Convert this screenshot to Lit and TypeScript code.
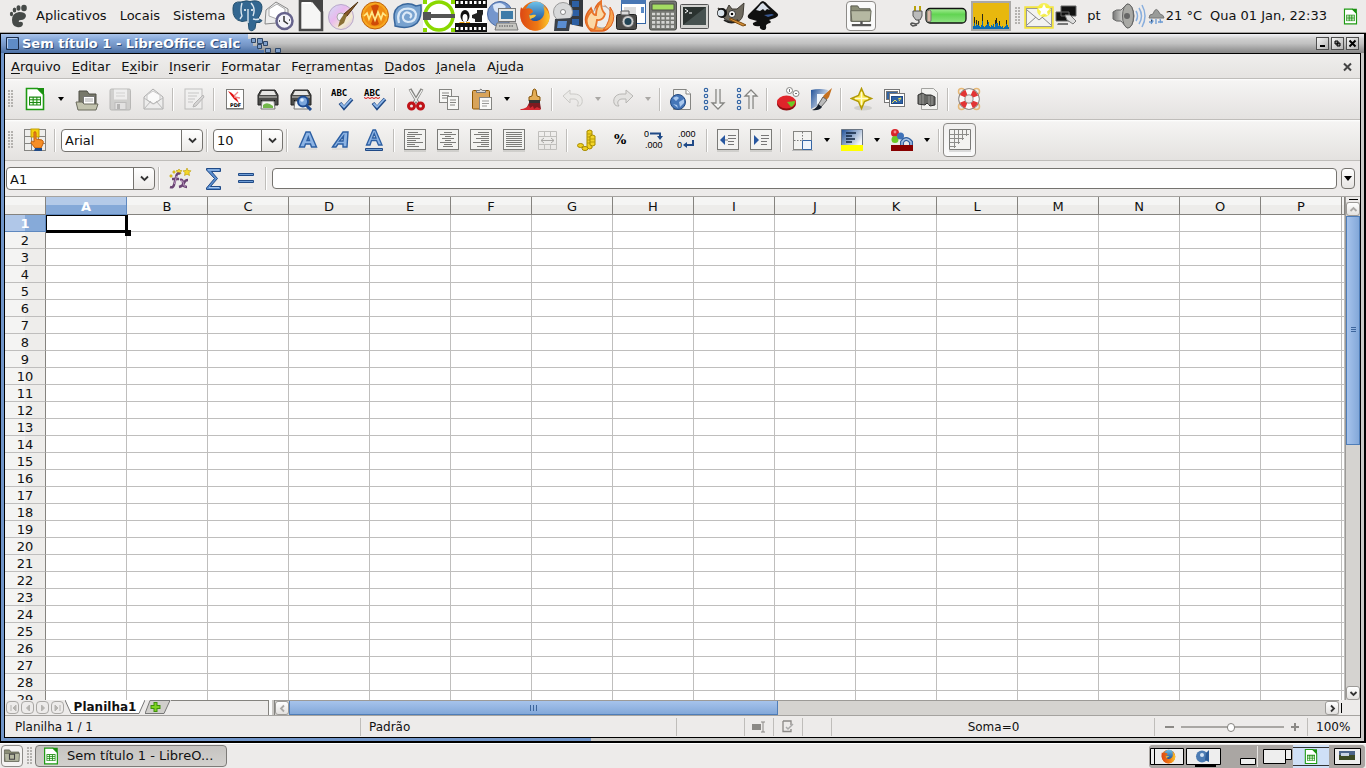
import { LitElement, html, svg, css } from "lit";
import { customElement } from "lit/decorators.js";
import { classMap } from "lit/directives/class-map.js";

const calcDoc = svg`
  <path d="M3.500 1.500h11l6 6v15h-17z" fill="#fff" stroke="#1e9a12" stroke-width="1.600"/>
  <path d="M14 1h7v7z" fill="#1a8f10"/>
  <path d="M6 9.500h12v9H6z" fill="#1d8a12"/>
  <path d="M7 10.700h2.600v1.600H7zM10.700 10.700h2.600v1.600h-2.600zM14.400 10.700H17v1.600h-2.600zM7 13.300h2.600v1.600H7zM10.700 13.300h2.600v1.600h-2.600zM14.400 13.300H17v1.600h-2.600zM7 15.900h2.600v1.600H7zM10.700 15.900h2.600v1.600h-2.600zM14.400 15.900H17v1.600h-2.600z" fill="#e9ffe4"/>`;

const printer = svg`
  <path d="M5 3h14l3 5v10H2V8z" fill="#4a4b49" stroke="#222"/>
  <path d="M6 4h12l2 4H4z" fill="#e6e6e4"/>
  <path d="M3 10h18" stroke="#8d8d8a" stroke-width="2"/>
  <path d="M5 13h14v2H5z" fill="#111"/>
  <path d="M6 14h12l1 8H5z" fill="#f4f4f2" stroke="#777"/>`;

const check = svg`<path d="M10 16l4 5 8-9" fill="none" stroke="#204a87" stroke-width="3.600"/><path d="M10.500 16.500l3.500 3.500 7.500-8" fill="none" stroke="#8fb8ea" stroke-width="1.800"/>`;

const lined = (rows: number[][]) => svg`
  <path d="M1 22.500h22v1H1z" fill="#b9b8b5"/>
  <rect x="1.500" y="1.500" width="21" height="20" fill="#f3f3f1" stroke="#7b7b78"/>
  ${rows.map(([a, b], i) => svg`<path d="M${a} ${4.5 + i * 2}H${b}" stroke="#7b7b78"/>`)}`;

const firefox = svg`
  <circle cx="16" cy="16" r="14.500" fill="#e66a10"/>
  <circle cx="17" cy="12" r="10.500" fill="url(#ffblue)"/>
  <path d="M2 7c1 2 3 2 4 2 4-2 8 0 8 3l-4 3c0 6 7 8 12 4 4-3 4-9 2-13 6 4 8 11 5 17-4 8-14 10-21 5C1 23 0 14 2 7z" fill="url(#ffor)"/>
  <path d="M10 15c2 1 4-1 7 0-1 3-4 3-6 4z" fill="#f9c33a"/>`;

const folder = svg`
  <path d="M5 7h7l2 3h11v13H5z" fill="#8b8e77" stroke="#55574a"/>
  <path d="M5 12h21l-1 11H6z" fill="#b5b8a2" stroke="#66685a"/>`;

const ICONS: Record<string, unknown> = {
  calc: calcDoc,
  open: svg`<path d="M4 20V4h8l2 3h7v13z" fill="#77786a" stroke="#4e4f45"/><rect x="8.500" y="9.500" width="11" height="8" fill="#fff" stroke="#777"/><path d="M10 12h8M10 14h8" stroke="#aaa"/><path d="M1 15h6l2 2h14l-2 6H3z" fill="#c2c3ae" stroke="#6a6b5d"/>`,
  save: svg`<g opacity=".55"><rect x="2" y="2" width="20.500" height="21" rx="1.500" fill="#b9b9b7" stroke="#8f8f8d"/><rect x="6" y="2.500" width="13" height="10" fill="#eee"/><path d="M8 6h9M8 9h9" stroke="#bbb"/><rect x="7" y="15.500" width="11" height="7" fill="#ddd" stroke="#999"/><path d="M9 17h3v5H9z" fill="#888"/></g>`,
  mail: svg`<g opacity=".75"><path d="M3 10l9-8 10 8v12H3z" fill="#eee" stroke="#999"/><path d="M6 8l6-4 7 4v5l-6 4-7-4z" fill="#fff" stroke="#bbb"/><path d="M3 22l7-8M22 22l-7-8M3 11l9 6 10-6" fill="none" stroke="#aaa"/></g>`,
  edit: svg`<g opacity=".45"><rect x="3" y="2" width="17" height="20" fill="#f4f4f4" stroke="#888"/><path d="M6 6h11M6 9h9M6 12h7M6 15h5" stroke="#999"/><path d="M21 8l-9 9-1 3 3-1 8-9z" fill="#bbb" stroke="#777"/></g>`,
  pdf: svg`<rect x="3.500" y="2.500" width="17" height="19" fill="#fff" stroke="#7b7b78"/><path d="M3 22.500h18" stroke="#aaa"/><path d="M5 4q5 2 9 8l2 4-5-4q-4-5-6-8z" fill="#e01010"/><path d="M11 9l4-4M11 10l6 1" fill="none" stroke="#f08080" stroke-width="1.300"/><text x="7" y="20" font-size="5" font-weight="700" font-family="DejaVu Sans">PDF</text>`,
  print: svg`${printer}<path d="M7 18q4-4 10 1v2H7z" fill="#72b84a"/>`,
  preview: svg`${printer}<path d="M17 18l5 5" stroke="#1e4c93" stroke-width="3"/><circle cx="14" cy="14.500" r="5" fill="#7ba6dc" stroke="#1e4c93" stroke-width="2"/><circle cx="13" cy="13" r="1.800" fill="#dceaff"/>`,
  spell: svg`<text x="1" y="8.500" font-size="9" font-weight="700" font-family="DejaVu Sans Mono, monospace">ABC</text>${check}`,
  autospell: svg`<text x="1" y="8.500" font-size="9" font-weight="700" font-family="DejaVu Sans Mono, monospace">ABC</text><path d="M1 10.500l2 1 2-1 2 1 2-1 2 1 2-1 2 1 2-1" fill="none" stroke="#d11"/>${check}`,
  cut: svg`<path d="M6 2l8 14M18 2l-8 14" stroke="#858582" stroke-width="3.200"/><path d="M6 3l8 13M18 3l-8 13" stroke="#f2f2f0" stroke-width="1.300"/><g fill="none" stroke="#c01318" stroke-width="3"><circle cx="7.500" cy="19" r="3"/><circle cx="16.500" cy="19" r="3"/></g>`,
  copy: svg`<g fill="#f7f7f5" stroke="#858582"><rect x="2.500" y="2.500" width="12" height="13"/><path d="M5 6h7M5 8.500h7M5 11h5"/><rect x="10.500" y="9.500" width="11" height="13"/><path d="M13 13h6M13 15.500h6M13 18h5"/></g>`,
  paste: svg`<rect x="2.500" y="3.500" width="17" height="18.500" rx="1" fill="#d8a45a" stroke="#8f5902"/><path d="M6.500 5.500V3.500h3q1-3 3 0h3v2z" fill="#ddd" stroke="#777"/><rect x="9.500" y="10.500" width="12" height="12" fill="#fafaf8" stroke="#858582"/><path d="M12 14h7M12 16.500h7M12 19h5" stroke="#9a9a98"/>`,
  brush: svg`<path d="M12 9l1-6q1.500-2 3 0l1 6 3 1v4H9v-4z" fill="#e3ad56" stroke="#84540b"/><path d="M9 13h11v3H9z" fill="#333"/><path d="M9 16h11l1 6H6z" fill="#7d1a20"/><path d="M0 22c5 0 7-2 9-4l1 3 3-2 1 3 3-2 4 2-1 1H1z" fill="#d52a32"/>`,
  undo: svg`<path d="M2 9l7-6v4h4c7 0 9 5 8 9-1 3-3 3-5 3 3-4 0-7-3-7H9v4z" fill="#ebeae8" stroke="#cbcac7"/>`,
  redo: svg`<path d="M22 9l-7-6v4h-4C4 7 2 12 3 16c1 3 3 3 5 3-3-4 0-7 3-7h4v4z" fill="#e4e3e1" stroke="#b7b6b3"/>`,
  web: svg`<path d="M4.500 2.500h13l4 4v16h-17z" fill="#f2f2f0" stroke="#858582"/><path d="M17 2v5h5" fill="#fff" stroke="#858582"/><circle cx="9" cy="15" r="7.500" fill="#4576b8" stroke="#234a82"/><path d="M4 11q4-3 6 0l-3 3zM10 15l5-3v4l-4 4zM4 17l4 1 1 3z" fill="#a9c8ee"/>`,
  sortdown: svg`<g fill="#fff" stroke="#3465a4" stroke-width="1.200"><circle cx="4" cy="3" r="1.700"/><circle cx="4" cy="9" r="1.700"/><circle cx="4" cy="15" r="1.700"/><circle cx="4" cy="21" r="1.700"/></g><path d="M14 2v14h-4l6 6 6-6h-4V2" fill="#fbfbfa" stroke="#858582" stroke-width="1.300"/><path d="M16 2v17" stroke="#ddd"/>`,
  sortup: svg`<g fill="#fff" stroke="#3465a4" stroke-width="1.200"><circle cx="4" cy="3" r="1.700"/><circle cx="4" cy="9" r="1.700"/><circle cx="4" cy="15" r="1.700"/><circle cx="4" cy="21" r="1.700"/></g><path d="M14 22V9h-4l6-6 6 6h-4v13" fill="#fbfbfa" stroke="#858582" stroke-width="1.300"/><path d="M16 5v17" stroke="#ddd"/>`,
  chart: svg`<ellipse cx="10.500" cy="17" rx="9.500" ry="6.500" fill="#8d0c10"/><ellipse cx="10.500" cy="15" rx="9.500" ry="6.500" fill="#e0242a"/><path d="M11 15l8-1q0 4-4 6z" fill="#6cc926"/><g fill="#fff" stroke="#858582"><circle cx="13.500" cy="3.500" r="3"/><circle cx="20" cy="6.500" r="3"/></g><path d="M13.500 2v3M19 6.500h2" stroke="#777"/>`,
  draw: svg`<path d="M2 3q9-2 17 0l-1 4H8v12l-6 3z" fill="url(#navy)"/><path d="M8 7h11l-8 11H8z" fill="#f1f6fb"/><path d="M23 1l-8 7-3 5 4 2 4-5z" fill="#c4701f"/><path d="M14 10l4 3-6 7-3-2z" fill="#bbb" stroke="#666"/><path d="M9 17l4 3q-3 4-10 3 5-2 6-6z" fill="#16202e"/>`,
  navigator: svg`<ellipse cx="13" cy="21" rx="9" ry="2.500" fill="#d1d0cd"/><path d="M11.500 1.500l3 7 7 3-7 3-3 7-3-7-7-3 7-3z" fill="#fbe84c" stroke="#b29a06" stroke-width="1.500"/><path d="M11.500 5v13M5 11.500h13" stroke="#fffbd0" stroke-width="1.500"/>`,
  gallery: svg`<g stroke="#777"><rect x="1.500" y="2.500" width="15" height="13" fill="#fff"/><rect x="3.500" y="4.500" width="11" height="8" fill="#3465a4"/><rect x="6.500" y="6.500" width="15" height="13" fill="#fff"/><rect x="8.500" y="9.500" width="11" height="7" fill="#2f62a5" stroke="#204a87"/></g><path d="M9 16l3-3 2 2M15 12l3-1-2 3" fill="none" stroke="#f0e25a"/>`,
  find: svg`<path d="M5.500 1.500h12l4 4v17h-16z" fill="#f2f2f0" stroke="#a3a3a0"/><path d="M2 8l4-2 4 2h5l4 2v8l-5 1-3-3-2 2-7-1z" fill="#666764" stroke="#333"/><path d="M4 8v9M7 7v10M13 9v9M16 9v9" stroke="#9b9c99"/>`,
  help: svg`<g fill="none" stroke="#e6b877" stroke-width="1.500"><circle cx="4.500" cy="4.500" r="3"/><circle cx="19.500" cy="4.500" r="3"/><circle cx="4.500" cy="19.500" r="3"/><circle cx="19.500" cy="19.500" r="3"/></g><circle cx="12" cy="12" r="7.200" fill="none" stroke="#77716c" stroke-width="7"/><circle cx="12" cy="12" r="7.200" fill="none" stroke="#fafafa" stroke-width="5.400"/><circle cx="12" cy="12" r="7.200" fill="none" stroke="#e23535" stroke-width="5.400" stroke-dasharray="5.650 5.660" transform="rotate(22 12 12)"/>`,
  styles: svg`<g fill="#eeeeec" stroke="#858582"><rect x="1.500" y="1.500" width="21" height="21"/><path d="M8.500 1v22M15.500 1v22M1 8.500h22M1 15.500h22"/></g><rect x="8" y="1" width="8" height="8" fill="#f6d20e" stroke="#c4a000"/><path d="M11 4q2-1 2 1v6l6 1q2 1 1 4l-2 4h-6l-4-5q0-3 3-1z" fill="#f78e26" stroke="#c2600c"/><path d="M12 20h7v3h-8z" fill="#204a87"/>`,
  bold: svg`<path d="M3.500 19L10 4h4l6.500 15h-5l-1-3h-5l-1 3zM11 12.500h2.500L12.300 9z" fill="#8db4e4" stroke="#2c5fa3" stroke-width="1.400"/><path d="M3 21h18" stroke="#d2d1ce"/>`,
  italic: svg`<path d="M3.500 19L14 4h5l-1 15h-4v-3H9l-2 3zM10.500 13H14l.500-5z" fill="#8db4e4" stroke="#2c5fa3" stroke-width="1.400"/><path d="M3 21h16" stroke="#d2d1ce"/>`,
  underline: svg`<path d="M4.500 17L11 2h2.500L20 17h-3.500l-2-4.500h-5L8 17zM10.500 10h3.500l-1.800-4.500z" fill="#8db4e4" stroke="#2c5fa3" stroke-width="1.300"/><path d="M3.500 20.500h17v2h-17z" fill="#729fcf" stroke="#204a87"/>`,
  left: lined([[5, 15], [4, 19], [4, 12], [4, 17], [4, 13], [4, 20], [4, 12], [4, 16]]),
  center: lined([[8, 16], [4, 20], [9, 15], [6, 18], [9, 15], [4, 20], [8, 16], [7, 17]]),
  right: lined([[9, 20], [5, 20], [12, 20], [7, 20], [12, 20], [4, 20], [12, 20], [8, 20]]),
  justify: lined([[4, 20], [4, 20], [4, 20], [4, 20], [4, 20], [4, 20], [4, 20], [4, 20]]),
  merge: svg`<g fill="none" stroke="#c0bfbc"><path d="M3.500 3.500h18v18h-18zM3.500 8.500h18M3.500 16.500h18M9.500 3v5M15.500 3v5M9.500 17v5M15.500 17v5"/><path d="M6 12.500h13M9 10l-3 2.500L9 15M16 10l3 2.500-3 2.500" stroke="#a9a8a5"/></g>`,
  currency: svg`<path d="M11 3q3-2 5 0v17q-2 2-5 0z" fill="#f0d020" stroke="#a58a00"/><path d="M11 6h5M11 9h5M11 12h5M11 15h5" stroke="#b89b05"/><path d="M14 8q3-2 5 0v9q-2 2-5 0z" fill="#f4d62a" stroke="#a58a00"/><path d="M14 11h5M14 14h5" stroke="#b89b05"/><ellipse cx="4.500" cy="17.500" rx="3" ry="2" fill="#f0d020" stroke="#a58a00"/><ellipse cx="9" cy="20.500" rx="3" ry="2" fill="#f0d020" stroke="#a58a00"/>`,
  percent: svg`<text x="5" y="16" font-size="13" font-weight="700" font-family="DejaVu Serif, serif">%</text>`,
  adddec: svg`<text x="2" y="9" font-size="9" font-family="Liberation Sans, sans-serif">0</text><text x="3" y="20" font-size="9" font-family="Liberation Sans, sans-serif">.000</text><path d="M8 5.500h10v3" fill="none" stroke="#204a87" stroke-width="2"/><path d="M15 8h6l-3 4z" fill="#204a87"/>`,
  deldec: svg`<text x="3" y="9" font-size="9" font-family="Liberation Sans, sans-serif">.000</text><text x="2" y="20" font-size="9" font-family="Liberation Sans, sans-serif">0</text><path d="M18 12v5h-8" fill="none" stroke="#204a87" stroke-width="2"/><path d="M12 14v6l-4-3z" fill="#204a87"/>`,
  outdent: svg`${lined([])}<path d="M9 7v10l-5-5z" fill="#2757a0"/><path d="M9 12h3M12 7.500h8M12 10.500h8M12 13.500h6M12 16.500h6" stroke="#777"/>`,
  indent: svg`${lined([])}<path d="M5 7v10l5-5z" fill="#2757a0"/><path d="M12 7.500h8M12 10.500h8M12 13.500h6M12 16.500h6" stroke="#777"/>`,
  borders: svg`<path d="M2 22.500h21" stroke="#bbb"/><rect x="3.500" y="3.500" width="18" height="18" fill="#f3f3f1" stroke="#858582"/><path d="M12.500 4v9M4 12.500h8" stroke="#777" stroke-dasharray="1.500 1.500"/><path d="M12.500 21v-8.500h9v9h-9z" fill="#eef4fb" stroke="#3465a4"/>`,
  highlight: svg`<path d="M1.500 1.500h21v16h-21z" fill="url(#navy)" stroke="#6b7684"/><path d="M6 5h10M6 8h6M6 11h9M6 14h6" stroke="#10243f" stroke-width="1.300"/><path d="M1 17h22v6H1z" fill="#ffff00"/>`,
  color: svg`<circle cx="5" cy="5" r="4" fill="#d8242a"/><circle cx="5" cy="11.500" r="3.500" fill="#6cc926"/><circle cx="10.500" cy="8" r="3.500" fill="#3f72b8"/><path d="M12 18v-4q4-6 9 0v4" fill="none" stroke="#2f5f9f" stroke-width="4"/><path d="M12 18v-4q4-6 9 0v4" fill="none" stroke="#a9c3e6" stroke-width="1.500"/><circle cx="5" cy="4" r="1.400" fill="#f4898c"/><path d="M1 17h22v6H1z" fill="#870000"/>`,
  grid: svg`<path d="M1.500 1.500h21v20h-21z" fill="#f3f3f1" stroke="#7b7b78"/><path d="M2 6.500h19M2 10.500h14M2 14.500h10M2 18.500h6M6.500 2v18M10.500 2v14M14.500 2v10M18.500 2v6" stroke="#8d8d8a"/><path d="M1 23h22" stroke="#bbb"/>`,
  fx: svg`<g fill="#f4d62a" stroke="#b89b05" stroke-width=".6"><path d="M19 1l1 2.500 3 .3-2 2 .5 2.700-2.500-1.300L16.500 8.500l.5-2.700-2-2 3-.3zM11 2l1 1.500 2 .2-1.500 1.300.5 2-2-1-2 1 .5-2L8 3.700l2-.2z"/><circle cx="6" cy="5" r="1.200"/><circle cx="3" cy="9" r="1.200"/></g><path d="M12 7q-3-2-4 3L6 18q-1 3-4 2M4 12h7M12 13q3-1 3 3t4 4M20 13q-3 0-4 3t-5 4" fill="none" stroke="#6b4474" stroke-width="2.400"/><path d="M8.500 9L6.500 17M12.500 13.500q3 0 3 3t2 3" fill="none" stroke="#c09bc4"/>`,
  sum: svg`<path d="M5.500 3V1.500h14v3h-9l6 7-7 8h10v3h-14V21l8-9.500z" fill="#5c8fd0" stroke="#204a87"/><path d="M7 3h11M8 20.500h10" stroke="#a9c8ee"/>`,
  equals: svg`<path d="M4.500 6.500h15v2h-15zM4.500 13.500h15v2h-15z" fill="#6f9dd6" stroke="#204a87"/><path d="M5 21h14" stroke="#dddcd9"/>`,
};

const APPS: [string, unknown][] = [
  ["pgAdmin", svg`<path d="M2 8q0-7 8-6 6-2 9-.500 8-2 11 2 3 5-3 15l4 2q-1 3-6 2l-1 6q-3 4-6 1l-1-9-6 1Q1 20 2 8z" fill="#336791" stroke="#24506f"/><path d="M11 3q-2 7 0 13l-2 3M20 3q5 5 2 13M17 9v14M22 19q4 1 6 0" fill="none" stroke="#dbe7f0" stroke-width="1.400"/><circle cx="14" cy="10" r="1" fill="#fff"/><circle cx="21" cy="10" r="1" fill="#fff"/>`],
  ["Correio", svg`<path d="M3 10L13 2l12 7v13L2 24z" fill="#eee" stroke="#888"/><path d="M6 9l8-5 8 5v7l-8 3-8-3z" fill="#fff" stroke="#aaa"/><circle cx="21.500" cy="21" r="8" fill="#f4f4fa" stroke="#66638c" stroke-width="2.500"/><path d="M21 16v5l4 3M16 21h1M26 20h1" stroke="#333" stroke-width="1.500" fill="none"/>`],
  ["LibreOffice", svg`<path d="M5 1h13l9 11v18H5z" fill="#f6f6f5" stroke="#4a4a4a" stroke-width="2.600"/><path d="M16 0h12v13z" fill="#444"/><path d="M7 3h9" stroke="#fff" stroke-width="2"/>`],
  ["Brasero", svg`<circle cx="14" cy="17" r="12.500" fill="url(#disc)" stroke="#b9a8cc"/><circle cx="14" cy="17" r="4" fill="#f4f0f8" stroke="#aaa"/><path d="M31 2L20 16h-2l-1-2z" fill="#8a5a2a" stroke="#4e320f"/><path d="M20 15l-3 8-6 4 2-7 4-6z" fill="#8a7034"/>`],
  ["Áudio", svg`<circle cx="16" cy="15.500" r="13.500" fill="#f6a821" stroke="#c0600a"/><circle cx="16" cy="15.500" r="11" fill="#f08c12"/><path d="M12 6q6-3 8 0-4 9 0 18-5 3-8 0 4-9 0-18z" fill="#cf4a08"/><path d="M5 16l3-3 2 6 3-7 3 8 3-8 3 7 2-6 3 3" fill="none" stroke="#ffe98a" stroke-width="1.700"/>`],
  ["Nautilus", svg`<path d="M4 24q-3-12 3-17Q16 1 25 6l5-1q1 12-4 18-8 7-22 3z" fill="#78a2cf" stroke="#38669c" stroke-width="1.500"/><path d="M8 23q-3-11 5-14 10-2 12 5 0 8-8 8-6-1-5-6 2-5 6-3 4 2 1 5" fill="none" stroke="#dbe9f7" stroke-width="2.200"/>`],
  ["Rede", svg`<path d="M0 0h32v32H0z" fill="#fff"/><path d="M0 0h4v4H0zM28 0h4v4h-4zM0 28h4v4H0zM28 28h4v4h-4z" fill="#8ad800"/><circle cx="16" cy="16" r="14" fill="none" stroke="#8ad800" stroke-width="3.500"/><path d="M0 12h8v2h24v4H8v2H0z" fill="#555"/>`],
  ["Vídeo", svg`<path d="M0 0h32v32H0z" fill="#111"/><path d="M0 8h32v15H0z" fill="#fff"/><path d="M1 2.500h31M1 28.500h31" stroke="#fff" stroke-width="3" stroke-dasharray="2.500 2"/><ellipse cx="10" cy="16" rx="4.500" ry="6" fill="#111"/><ellipse cx="10" cy="18" rx="2.500" ry="4" fill="#fff"/><path d="M5 22h4l1 1H4zM11 22h4v1h-4z" fill="#f0a010"/><path d="M17 15l5-2v-3h6v4l-1 2v6h-7v-3l-3-1z" fill="#222"/>`],
  ["Remoto", svg`<circle cx="13" cy="14" r="12.500" fill="#7596cc" stroke="#4a6ba5"/><path d="M6 5q8-5 13 2l-7 6q-6-1-6-8z" fill="#dbe6f6"/><rect x="11.500" y="8.500" width="17" height="13" fill="#e8e8e5" stroke="#777"/><path d="M14 11h12v8H14z" fill="#3e7ba8"/><path d="M10 23h19l2 7H8z" fill="#c7c7c2" stroke="#777"/><path d="M12 26h14" stroke="#888" stroke-width="2" stroke-dasharray="1.500 1"/>`],
  ["Firefox", firefox],
  ["Cinema", svg`<path d="M18 0h14v27l-14-3z" fill="#34383e"/><path d="M21 1h7v6h-7zM21 10h7v6h-7zM21 19h7v6h-7z" fill="#2d5fa3"/><circle cx="12" cy="12" r="9.500" fill="#d7d8d9" stroke="#999"/><circle cx="12" cy="12" r="2.500" fill="#fff" stroke="#888"/><path d="M4 19l16-1-2 13H3z" fill="#3c4148"/><path d="M7 21h9l-1 7H6z" fill="#5b8dd0"/>`],
  ["Gravador", svg`<path d="M8 31Q-3 20 8 8q1 4 3 5 1-8 7-12-1 7 4 12 2-3 1-6 11 10 3 20-3 4-7 4z" fill="#f5a04a" stroke="#e0601c" stroke-width="1.500"/><ellipse cx="19" cy="17" rx="10" ry="11" fill="#ececec" stroke="#aaa"/><path d="M6 28q-6-9 3-17 1 4 4 4 0-8 5-13 0 8 4 12-2 7-8 6-1 7-3 10z" fill="#fbd9a6" stroke="#e8742a" stroke-width="1.800"/><path d="M27 7q7 9 1 19-4 4-8 4 8-8 7-23z" fill="#f7a552" stroke="#e0601c"/>`],
  ["Captura", svg`<rect x="6.500" y=".5" width="24" height="23" fill="#fff" stroke="#3465a4"/><path d="M6 0h25v4H6z" fill="#4877b4"/><path d="M9 7h12v8H9z" fill="#ddd"/><path d="M26 7h3v6h-3z" fill="#5a8ac6"/><rect x="1.500" y="14.500" width="20" height="15" rx="2" fill="#4a4a48" stroke="#222"/><path d="M6 11h8v4H6z" fill="#ddd" stroke="#555"/><circle cx="13" cy="21.500" r="6" fill="#ccc" stroke="#555"/><circle cx="13" cy="21.500" r="3.500" fill="#245"/>`],
  ["Calculadora", svg`<rect x="2.500" y="1" width="27" height="29" rx="2" fill="#747671" stroke="#4c4e4a"/><path d="M5 4h22v6H5z" fill="#a4dc62" stroke="#4c4e4a"/>${[0, 1, 2, 3].map(r => svg`<path d="M5 ${14 + r * 4.2}h23" stroke="#d4d5d2" stroke-width="2.600" stroke-dasharray="3.200 1.500"/>`)}`],
  ["Terminal", svg`<rect x="1.500" y="4.500" width="28" height="24" rx="1" fill="#d3d3d0" stroke="#555"/><rect x="4" y="7" width="23" height="18" fill="#2b3330"/><path d="M4 25l23-18v18z" fill="#475250"/><path d="M6 9l3 2-3 2M10 13h3" fill="none" stroke="#fff"/>`],
  ["GIMP", svg`<path d="M3 8q4 2 8 3l3-6 3 4h5l7-6-1 12q-2 8-10 7Q7 21 3 8z" fill="#6f6a5f" stroke="#3f3b34"/><circle cx="7" cy="13" r="5" fill="#111"/><circle cx="6" cy="13" r="3.300" fill="#d9e2ea"/><circle cx="17" cy="14" r="3.500" fill="#fff" stroke="#333"/><circle cx="17" cy="14" r="1.300"/><path d="M9 20q8 5 14 0" stroke="#222" stroke-width="2" fill="none"/><path d="M15 18l12 5 4 2-3 1-13-6z" fill="#d58f3a" stroke="#7d4c10"/>`],
  ["Inkscape", svg`<path d="M16 1q3 1 5 4l9 8q3 3-2 5l-6 2q3 2 1 3-4 1-4 3 1 4-3 4-4-1-3-4-8 1-7-3l4-2-7-2q-4-2-1-5L12 4q2-3 4-3z" fill="#101010"/><path d="M16 3l7 7-3-1-2 2-2-2-3 2-4-1 5-6z" fill="#d9dfe8"/><path d="M17 15l8-1 2 1-6 2z" fill="#3a5a96"/>`],
];

const BAR1 = ["calc", "wide", "open", "save", "mail", "|", "edit", "|", "pdf", "print", "preview", "|", "spell", "autospell", "|", "cut", "copy", "paste", "v", "brush", "|", "undo", "off", "redo", "off", "|", "web", "sortdown", "sortup", "|", "chart", "draw", "|", "navigator", "gallery", "find", "|", "help"];
const BAR2 = ["bold", "italic", "underline", "|", "left", "center", "right", "justify", "merge", "|", "currency", "percent", "adddec", "deldec", "|", "outdent", "indent", "|", "borders", "v", "highlight", "v", "color", "v", "|", "grid"];

const MENUS = [["", "A", "rquivo"], ["", "E", "ditar"], ["E", "x", "ibir"], ["", "I", "nserir"], ["", "F", "ormatar"], ["Fe", "r", "ramentas"], ["", "D", "ados"], ["", "J", "anela"], ["Aj", "u", "da"]];
const COLUMNS = "ABCDEFGHIJKLMNOP".split("");
const ROWS = Array.from({ length: 29 }, (_, i) => i + 1);
const LOAD = [3, 12, 3, 9, 4, 8, 3, 2, 4, 15, 3, 2, 3, 4, 9, 7, 3, 2, 4, 3, 5, 2, 9, 11, 6, 3, 8, 3, 2, 3, 1, 2, 3, 9, 4, 2];

@customElement("app-root")
export class AppRoot extends LitElement {
  static styles = css`
    :host { display: flex; flex-direction: column; height: 100vh; overflow: hidden; background: #edebea; color: #111; font: 13px/16px "DejaVu Sans", sans-serif; cursor: default; }
    *, *::before, *::after { box-sizing: border-box; }
    button, input, select { font: inherit; color: inherit; margin: 0; padding: 0; border: 0; background: none; outline: 0; }
    svg { display: block; flex: none; }
    .panel { display: flex; align-items: center; height: 33px; flex: none; border-bottom: 1px solid #a5a3a1; background: #edebea; white-space: nowrap; }
    .foot { padding: 0 8px; }
    .places { display: flex; gap: 13px; margin-right: 6px; }
    .launchers { display: flex; height: 32px; }
    .launchers .gimp { margin-left: 4px; }
    .tray { display: flex; align-items: center; margin-left: auto; padding-right: 7px; }
    .mount { display: grid; place-items: center; width: 30px; height: 30px; border: 1px solid #8d8b88; border-radius: 4px; background: #fafafa; margin-right: 33px; }
    .gap { margin-left: 4px; }
    .kb { padding: 0 11px 0 9px; }
    .date { padding: 0 15px 0 8px; }
    .grip { flex: none; width: 5px; height: 18px; background-image: radial-gradient(circle at 1px 1px, #b4b2af 1px, transparent 1px); background-size: 3px 3px; }

    .window { flex: 1; min-height: 0; display: flex; background: #000; padding: 1px 2px 2px 1px; }
    .deco { flex: 1; min-width: 0; display: flex; flex-direction: column; background: linear-gradient(90deg, #7095c9 590px, #c9c9c7 590px); }
    .title { height: 19px; flex: none; display: flex; align-items: center; background: linear-gradient(#f1f1f5, #cfcfcf 25%, #c1c1c1 50%, #868686); padding-right: 5px; }
    .caption { display: flex; align-items: center; gap: 3px; height: 19px; padding: 0 4px 0 5px; color: #fff; font-weight: 700; text-shadow: 1px 1px 0 #2c4a78; background: linear-gradient(#a9c3ea, #86a8d9 30%, #7595c5 60%, #4b6fa3); white-space: nowrap; }
    .title .spacer { flex: 1; }
    .wbtn { width: 13px; height: 13px; margin-left: 2px; background: linear-gradient(135deg, #f4f4f4, #b3b3b3); border: 1px solid #4e4e4e; display: grid; place-items: center; }
    .body { flex: 1; min-height: 0; display: flex; flex-direction: column; margin: 0 3px 3px; border: 1px solid #000; background: #edebea; }

    .menubar { display: flex; align-items: center; gap: 11px; height: 25px; flex: none; padding: 2px 6px 0; border-bottom: 1px solid #bfbdba; background: linear-gradient(#efeeed, #e5e3e1); }
    .menubar u { text-underline-offset: 2px; }
    .menubar .close { margin-left: auto; }
    .toolbar { display: flex; align-items: center; height: 41px; flex: none; border-bottom: 1px solid #bfbdba; background: linear-gradient(#fff, #f5f4f3 2px, #e4e2e0); }
    .toolbar .grip { margin: 0 5px 0 3px; }
    .tool { display: grid; place-items: center; width: 33px; height: 34px; flex: none; }
    .tool.on { border: 1px solid #8d8b88; border-radius: 4px; background: linear-gradient(#f1f0ef, #fafafa); }
    .drop { display: grid; place-items: center; width: 17px; height: 34px; flex: none; }
    .drop.wide { width: 19px; }
    .sep { width: 2px; height: 23px; margin: 0 3px; flex: none; background: #bfbdba; border-right: 1px solid #fff; }
    .combo { display: grid; height: 23px; flex: none; }
    .combo > * { grid-area: 1 / 1; }
    .combo select { appearance: none; width: 100%; height: 23px; padding: 2px 24px 0 3px; border: 1px solid #75736f; border-radius: 4px; background: linear-gradient(90deg, #75736f, #75736f) right 20px top / 1px 100% no-repeat, linear-gradient(#fff, #eceae8) right / 20px 100% no-repeat, #fff; }
    .combo svg { justify-self: end; align-self: center; margin-right: 6px; pointer-events: none; }
    .font { width: 142px; margin-left: 2px; }
    .size { width: 70px; margin-left: 2px; }
    .name { width: 149px; }
    .formula { display: flex; align-items: center; height: 36px; flex: none; padding: 0 5px 0 1px; border-bottom: 1px solid #a5a3a0; background: #edebea; }
    .formula input { flex: 1; min-width: 0; height: 21px; margin: 0 4px 0 2px; padding: 0 4px; border: 1px solid #75736f; border-radius: 4px; background: #fff; }
    .expand { width: 14px; height: 21px; border: 1px solid #75736f; border-radius: 4px; background: linear-gradient(#fff, #e6e4e2); display: grid; place-items: center; }

    .work { flex: 1; min-height: 0; display: flex; background: #fff; }
    .sheet { flex: 1; min-width: 0; overflow: hidden; }
    table { table-layout: fixed; width: 1340px; min-width: 100%; border-collapse: separate; border-spacing: 0; }
    .rowhead { width: 41px; }
    .col { width: 81px; }
    th, td { padding: 2px 0 0; height: 17px; line-height: 14px; border-right: 1px solid #bfbebd; border-bottom: 1px solid #bfbebd; font-weight: 400; overflow: hidden; }
    thead th { height: 18px; line-height: 15px; border-color: #85837f; background: linear-gradient(#f5f5f4 50%, #edecea 50%); }
    tbody th { border-right-color: #85837f; background: linear-gradient(90deg, #f4f4f3 50%, #eeedeb 50%); }
    thead .sel { color: #fff; font-weight: 700; border-color: #5e88bf; background: linear-gradient(#b4cae8 45%, #85a9d8 45%); }
    tbody .sel { color: #fff; font-weight: 700; border-color: #5e88bf; background: linear-gradient(90deg, #b0c7e8 50%, #86aad9 50%); }
    .active { position: relative; overflow: visible; }
    .cursor { position: absolute; left: 0; top: 0; width: 82px; height: 18px; border: solid #000; border-width: 1px 3px 3px 1px; }
    .cursor::after { content: ""; position: absolute; right: -6px; bottom: -6px; width: 6px; height: 6px; background: #000; }
    .vbar { width: 15px; flex: none; display: flex; flex-direction: column; background: #d5d3d0; border-left: 1px solid #9c9a97; }
    .split { height: 5px; background: #edebea; display: grid; place-items: center; }
    .split i { width: 9px; height: 1px; background: #000; }
    .arrow { height: 14px; flex: none; border: 1px solid #9c9a97; border-radius: 3px; background: linear-gradient(#fff, #e3e1df); display: grid; place-items: center; }
    .vthumb { flex: 227; border: 1px solid #4f7db8; background: linear-gradient(90deg, #a6c3ec, #83a8d9); display: grid; place-items: center; }
    .vrest { flex: 242; }

    .tabs { display: flex; height: 16px; flex: none; border-bottom: 1px solid #a5a3a0; background: #edebea; }
    .nav { width: 13px; height: 13px; margin: 1px 1px 0; border: 1px solid #aaa8a5; border-radius: 4px; display: grid; place-items: center; flex: none; }
    .tab { display: grid; width: 80px; font-size: 12px; font-weight: 700; line-height: 14px; flex: none; }
    .tab > * { grid-area: 1 / 1; }
    .tab span { justify-self: center; }
    .add { width: 26px; flex: none; }
    .fill { width: 97px; border-top: 1px solid #85837f; flex: none; }
    .hsplit { width: 7px; flex: none; background: #fafafa; border: solid #85837f; border-width: 0 1px; box-shadow: inset -2px 0 #c9c7c4; }
    .hbar { flex: 1; display: flex; border-top: 1px solid #9c9a97; background: #d5d3d0; min-width: 0; }
    .hbar .arrow { width: 14px; height: 14px; }
    .hthumb { flex: 488; border: 1px solid #4f7db8; border-top: 0; background: linear-gradient(#a6c3ec, #83a8d9); display: grid; place-items: center; }
    .hrest { flex: 548; }
    .hend { width: 21px; flex: none; display: flex; align-items: center; padding-left: 2px; }
    .hend i { width: 1px; height: 10px; background: #000; }
    .status { display: grid; grid-template-columns: 355fr 316fr 68px 29px 29px 29px 323fr 153px 53px; align-items: center; height: 21px; flex: none; white-space: nowrap; font-size: 12px; }
    .status > * { height: 18px; padding: 1px 7px 0 8px; border-left: 1px solid #bfbdba; min-width: 0; }
    .status > :first-child { border-left: 0; padding-left: 10px; }
    .status .sum { text-align: center; }
    .status .ico { display: grid; place-items: center; padding: 0; }
    .zoom { display: flex; align-items: center; gap: 6px; color: #8b8986; }
    .zoom input { appearance: none; flex: 1; min-width: 0; height: 10px; background: linear-gradient(#a9a7a4, #a9a7a4) center / 100% 2px no-repeat; }
    .zoom input::-webkit-slider-thumb { appearance: none; width: 8px; height: 9px; border: 1px solid #85837f; border-radius: 5px; background: #fff; }

    .bottom { display: flex; align-items: center; height: 25px; flex: none; border-top: 1px solid #fff; padding-left: 1px; background: #edebea; }
    .desk { width: 22px; height: 22px; border: 1px solid #8d8b88; border-radius: 4px; background: #f4f3f2; display: grid; place-items: center; }
    .bottom .grip { margin: 0 3px 0 4px; }
    .task { display: flex; align-items: center; gap: 7px; width: 192px; height: 22px; padding: 0 6px; border: 1px solid #7d7b78; border-radius: 4px; background: linear-gradient(#c6c4c1, #d2d0cd); white-space: nowrap; }
    .pager { display: flex; margin-left: auto; height: 23px; border-radius: 4px; overflow: hidden; background: #aaa6a3; margin-right: 1px; }
  `;

  private icon(name: string, size = 24) {
    return html`<svg width=${size} height=${size} viewBox="0 0 24 24">${ICONS[name]}</svg>`;
  }

  private chevron(path = "M1 2.500l3.500 3.500L8 2.500", color = "#333") {
    return html`<svg width="9" height="9" viewBox="0 0 9 9"><path d=${path} fill="none" stroke=${color} stroke-width="1.800"/></svg>`;
  }

  private tools(items: string[]) {
    return items.map(it => {
      if (it === "|") return html`<span class="sep"></span>`;
      if (it === "v" || it === "wide" || it === "off")
        return html`<button class=${classMap({ drop: true, wide: it === "wide" })} aria-label="Mais opções"><svg width="6" height="4" viewBox="0 0 6 4"><path d="M0 0h6L3 4z" fill=${it === "off" ? "#aaa8a5" : "#000"}/></svg></button>`;
      return html`<button class=${classMap({ tool: true, on: it === "grid" })} aria-label=${it}>${this.icon(it)}</button>`;
    });
  }

  private defs() {
    return html`<svg width="0" height="0"><defs>
      <linearGradient id="navy" x1="0" y1="0" x2="1" y2=".6"><stop offset="0" stop-color="#1d4f98"/><stop offset="1" stop-color="#f2f5f8"/></linearGradient>
      <linearGradient id="ffblue" x1="0" y1="0" x2="0" y2="1"><stop offset="0" stop-color="#6fc3ea"/><stop offset="1" stop-color="#1b4c96"/></linearGradient>
      <linearGradient id="ffor" x1="0" y1="0" x2="1" y2="0"><stop offset="0" stop-color="#dd4814"/><stop offset=".6" stop-color="#ee7a14"/><stop offset="1" stop-color="#fbc62c"/></linearGradient>
      <linearGradient id="disc" x1="0" y1="0" x2="1" y2="1"><stop offset="0" stop-color="#cfe0f4"/><stop offset=".4" stop-color="#e9b9ee"/><stop offset=".7" stop-color="#f3ecd0"/><stop offset="1" stop-color="#d1b4e8"/></linearGradient>
      <linearGradient id="green" x1="0" y1="0" x2="0" y2="1"><stop offset="0" stop-color="#a8ee98"/><stop offset=".4" stop-color="#62d452"/><stop offset="1" stop-color="#8fe283"/></linearGradient>
      <linearGradient id="steel" x1="0" y1="0" x2="1" y2="0"><stop offset="0" stop-color="#777"/><stop offset=".5" stop-color="#d8d8d5"/><stop offset="1" stop-color="#777"/></linearGradient>
      <linearGradient id="cap" x1="0" y1="0" x2="0" y2="1"><stop offset="0" stop-color="#a9c3ea"/><stop offset=".3" stop-color="#86a8d9"/><stop offset=".6" stop-color="#7595c5"/><stop offset="1" stop-color="#4b6fa3"/></linearGradient>
    </defs></svg>`;
  }

  private topPanel() {
    return html`<header class="panel">
      <svg class="foot" width="36" height="24" viewBox="0 0 20 24"><g fill="#464a48"><ellipse cx="3.500" cy="10" rx="1.600" ry="2.200"/><ellipse cx="6.500" cy="6" rx="1.800" ry="2.600"/><ellipse cx="10.500" cy="4" rx="2" ry="2.800"/><ellipse cx="16" cy="4" rx="2.800" ry="3.200"/><path d="M4 16q0-7 7-8 7 0 7 4-1 4-5 4-3 0-2 2 4-1 4 2-1 4-6 3-5-1-5-7z"/></g></svg>
      <nav class="places"><button>Aplicativos</button><button>Locais</button><button>Sistema</button></nav>
      <div class="launchers">${APPS.map(([name, art]) => html`<button class=${classMap({ gimp: name === "GIMP" })} aria-label=${name}><svg width="32" height="32" viewBox="0 0 32 32">${art}</svg></button>`)}</div>
      <div class="tray">
        <button class="mount" aria-label="Unidade"><svg width="26" height="26" viewBox="2 4 27 27">${folder}<path d="M6 27h20M16 23v4M14 27h4" stroke="#555" stroke-width="2.500"/></svg></button>
        <svg width="16" height="22" viewBox="0 0 16 22"><path d="M6 1v5M11 1v5" stroke="#b8a20a" stroke-width="2"/><path d="M4 6h9v5l-2 4H7l-3-4z" fill="#bbb" stroke="#555"/><path d="M9 15q3 3-2 4l-4-1q-3 1 1 3l4-1" fill="none" stroke="#555" stroke-width="1.500"/></svg>
        <svg width="42" height="18" viewBox="0 0 42 18"><rect x="1" y="1.500" width="40" height="14.500" rx="4" fill="url(#green)" stroke="#111" stroke-width="1.300"/><path d="M2 4q3-2 4 0v10q-2 2-4 0z" fill="#d8b8a4" stroke="#777"/></svg>
        <svg class="gap" width="40" height="30" viewBox="0 0 40 30"><rect x="1" y="1" width="38" height="28" fill="#e8b80e" stroke="#aaa8a5" stroke-width="2"/>${LOAD.map((h, i) => svg`<path d="M${2.5 + i} 28v${-h}" stroke=${h > 7 ? "#2a2a18" : "#0a6ab0"}/><path d="M${2.5 + i} 28v${-Math.ceil(h / 2)}" stroke="#0a6ab0"/>`)}</svg>
        <span class="gap grip"></span>
        <svg class="gap" width="30" height="26" viewBox="0 0 30 26"><rect x="1.500" y="4.500" width="27" height="20" fill="#eee" stroke="#f2e440" stroke-width="2.500"/><rect x="2.500" y="5.500" width="25" height="18" fill="#f3f3f1" stroke="#999"/><path d="M3 22l9-8M27 22l-9-8M3 7l12 10L27 7" fill="none" stroke="#888"/><circle cx="20" cy="7" r="7" fill="#f7f03a" opacity=".85"/><path d="M20 1l2 4 4 .500-3 3 1 4-4-2-4 2 1-4-3-3 4-.500z" fill="#fff"/></svg>
        <svg width="24" height="22" viewBox="0 0 24 22"><path d="M7 1h15v10H7zM2 7h13v9H2z" fill="#111" stroke="#666"/><path d="M4 18h10v2H3z" fill="#777"/><path d="M11 10h5l6 6-3 3-6-4z" fill="#ddd" stroke="#777"/></svg>
        <span class="kb">pt</span>
        <svg width="34" height="28" viewBox="0 0 34 28"><path d="M1 10q3-3 8-2l6-6q6 0 7 12-1 12-7 12l-6-7q-5 1-8-2z" fill="url(#steel)" stroke="#666"/><ellipse cx="16" cy="14" rx="5.500" ry="12" fill="#a9a9a5" stroke="#666"/><circle cx="15" cy="14" r="3" fill="#666"/><path d="M24 9q3 5 0 10M27 6q5 8 0 16M30 3q6 11 0 22" fill="none" stroke="#88aedd" stroke-width="1.500"/></svg>
        <svg width="20" height="18" viewBox="0 0 20 18"><path d="M3 11q0-4 4-4 3-9 7 0 4 1 4 4z" fill="#999b99" stroke="#777"/><path d="M5 12l2 2-2 3M10 12v5M14 12l1 4M3 15h4M12 15h5" stroke="#6c9bd3" stroke-width="1.300"/></svg>
        <span>21 °C</span><time class="date">Qua 01 Jan, 22:33</time>
        <svg width="17" height="17" viewBox="2 0 20 24">${calcDoc}</svg>
      </div>
    </header>`;
  }

  private titleBar() {
    return html`<div class="title">
      <div class="caption"><svg width="13" height="13" viewBox="0 0 13 13"><path d="M.5.5h12v12H.5z" fill="#5f8cc6" stroke="#1b2c48"/><path d="M1.500 11V1.500H11" fill="none" stroke="#b5cdf0"/></svg>Sem título 1 - LibreOffice Calc</div>
      <svg width="46" height="19" viewBox="0 0 46 19"><path d="M0 0h4v5h5v7h6v4h5v3H0z" fill="url(#cap)"/><g fill="#7f9fca" stroke="#2f4767"><path d="M7.500 4.500h4v4h-4zM13.500 4.500h5v5h-5zM19.500 7.500h4v4h-4zM13.500 10.500h4v4h-4zM21.500 14.500h5v4h-5zM31.500 14.500h5v4h-5z"/></g></svg>
      <span class="spacer"></span>
      <button class="wbtn" aria-label="Minimizar"><svg width="9" height="9"><path d="M2 7h5" stroke="#000" stroke-width="2"/></svg></button>
      <button class="wbtn" aria-label="Restaurar"><svg width="9" height="9"><path d="M2 2h3v3H2zM4 4h3v3H4z" fill="#888" stroke="#000"/></svg></button>
      <button class="wbtn" aria-label="Fechar"><svg width="9" height="9"><path d="M1.500 1.500l6 6M7.500 1.500l-6 6" stroke="#000" stroke-width="2"/></svg></button>
    </div>`;
  }

  private pager() {
    const mini = (art: unknown, bg = "#aaa6a3") => html`<button aria-label="Área de trabalho"><svg width="36" height="23" viewBox="0 0 36 23"><path d="M0 0h36v23H0z" fill=${bg}/>${art}</svg></button>`;
    return html`<nav class="pager">
      ${mini(svg`<path d="M1.500 3.500h33v16h-33zM5.500 3.500v16" fill="#eee" stroke="#000"/><svg x="12" y="4" width="15" height="15" viewBox="0 0 32 32">${firefox}</svg>`)}
      ${mini(svg`<path d="M1.500 3.500h34v16h-34z" fill="#eee" stroke="#000"/><path d="M10 21h21" stroke="#000" stroke-width="2"/><circle cx="17" cy="11.500" r="6" fill="#4c7cb4"/><path d="M21 8l3-3v12l-4-2z" fill="#2c5c98"/><circle cx="17" cy="10" r="2" fill="#d5e4f5"/>`)}
      ${mini(svg`<path d="M19.500 13.500h15v6h-15z" fill="#eee" stroke="#000"/>`)}
      ${mini(svg`<path d="M.5 1v21" stroke="#e5e3e1"/><path d="M28.500 4.500h6v10h-6zM6.500 4.500h22v14h-22z" fill="#eee" stroke="#000"/>`)}
      ${mini(svg`<path d="M0 2.500h36M0 20.500h36" stroke="#333"/><svg x="10" y="3" width="16" height="17" viewBox="0 0 24 24">${calcDoc}</svg>`, "#cfe0f7")}
      ${mini(svg`<path d="M5.500 3.500h26v16h-26z" fill="#eee" stroke="#000"/><path d="M10 6h16v4H10z" fill="#4c6488"/><path d="M10 10h16v5H10z" fill="#3d4a22"/><path d="M12 8h8v3h-8z" fill="#c9d3e2"/>`)}
    </nav>`;
  }

  render() {
    return html`${this.defs()}${this.topPanel()}
      <main class="window"><section class="deco">
        ${this.titleBar()}
        <div class="body">
          <nav class="menubar">${MENUS.map(([a, u, b]) => html`<button>${a}<u>${u}</u>${b}</button>`)}<button class="close" aria-label="Fechar documento"><svg width="12" height="10" viewBox="0 0 12 10"><path d="M2 1.500l7 7M9 1.500l-7 7" stroke="#444" stroke-width="2"/></svg></button></nav>
          <div class="toolbar"><span class="grip"></span>${this.tools(BAR1)}</div>
          <div class="toolbar"><span class="grip"></span>${this.tools(["styles", "|"])}
            <span class="combo font"><select aria-label="Nome da fonte"><option>Arial</option></select>${this.chevron()}</span><span class="sep"></span>
            <span class="combo size"><select aria-label="Tamanho da fonte"><option>10</option></select>${this.chevron()}</span><span class="sep"></span>
            ${this.tools(BAR2)}</div>
          <div class="formula">
            <span class="combo name"><select aria-label="Caixa de nome"><option>A1</option></select>${this.chevron()}</span><span class="sep"></span>
            ${this.tools(["fx", "sum", "equals", "|"])}
            <input type="text" aria-label="Linha de entrada">
            <button class="expand" aria-label="Expandir"><svg width="8" height="5" viewBox="0 0 8 5"><path d="M0 0h8L4 5z"/></svg></button>
          </div>
          <div class="work">
            <div class="sheet"><table>
              <colgroup><col class="rowhead">${COLUMNS.map(() => html`<col class="col">`)}<col></colgroup>
              <thead><tr><th></th>${COLUMNS.map((c, i) => html`<th class=${i ? "" : "sel"}>${c}</th>`)}<th></th></tr></thead>
              <tbody>${ROWS.map(r => html`<tr><th class=${r === 1 ? "sel" : ""}>${r}</th>${COLUMNS.map((_, i) => r === 1 && i === 0 ? html`<td class="active"><span class="cursor"></span></td>` : html`<td></td>`)}<td></td></tr>`)}</tbody>
            </table></div>
            <div class="vbar">
              <div class="split"><i></i></div>
              <button class="arrow" aria-label="Subir">${this.chevron("M1.500 6l3-3 3 3", "#aaa8a5")}</button>
              <div class="vthumb"><svg width="5" height="6"><path d="M0 .5h5M0 2.500h5M0 4.500h5" stroke="#3c659c"/></svg></div>
              <div class="vrest"></div>
              <button class="arrow" aria-label="Descer">${this.chevron("M1.500 3l3 3 3-3")}</button>
            </div>
          </div>
          <div class="tabs">
            ${["M3 2v6M8 2L5 5l3 3z", "M6.500 2L3.500 5l3 3z", "M3.500 2l3 3-3 3z", "M7 2v6M2 2l3 3-3 3z"].map(d => html`<button class="nav" aria-label="Navegar planilhas"><svg width="10" height="10"><path d=${d} fill="#b5b3b0" stroke="#b5b3b0"/></svg></button>`)}
            <button class="tab"><svg width="80" height="15" viewBox="0 0 80 15"><path d="M0 0l6 14h68l6-14" fill="#fff"/><path d="M0 0l6 13.500h68l6-13.500" fill="none" stroke="#777"/></svg><span>Planilha1</span></button>
            <button class="add" aria-label="Adicionar planilha"><svg width="26" height="15" viewBox="0 0 26 15"><path d="M5 .5h20L19 13.500H0z" fill="#d0cecb" stroke="#777"/><path d="M10.500 2v10M5.500 7h10" stroke="#3f8f0c" stroke-width="4"/><path d="M10.500 3v8M6.500 7h8" stroke="#7ed321" stroke-width="2"/></svg></button>
            <span class="fill"></span><span class="hsplit"></span>
            <div class="hbar">
              <button class="arrow" aria-label="Esquerda">${this.chevron("M6 1.500l-3 3 3 3", "#aaa8a5")}</button>
              <div class="hthumb"><svg width="8" height="6"><path d="M.5 0v6M3.500 0v6M6.500 0v6" stroke="#3c659c"/></svg></div>
              <div class="hrest"></div>
              <button class="arrow" aria-label="Direita">${this.chevron("M3 1.500l3 3-3 3")}</button>
            </div>
            <div class="hend"><i></i></div>
          </div>
          <footer class="status">
            <span>Planilha 1 / 1</span><span>Padrão</span><span></span>
            <span class="ico"><svg width="14" height="12"><path d="M0 3h9v6H0z" fill="#8b8986"/><path d="M9 1h4M9 11h4M11 1v10" stroke="#8b8986"/></svg></span>
            <span class="ico"><svg width="12" height="13"><path d="M1 1h8v4M9 9v2.500H1V1" fill="none" stroke="#8b8986" stroke-width="1.300"/><path d="M4 7l2 2 5-5" fill="none" stroke="#aaa" stroke-width="1.500"/></svg></span>
            <span></span><span class="sum">Soma=0</span>
            <label class="zoom"><svg width="12" height="10"><path d="M2 5h9" stroke="#8b8986" stroke-width="2"/></svg><input type="range" min="0" max="100" value="48" aria-label="Zoom"><svg width="10" height="10"><path d="M1 5h8M5 1v8" stroke="#8b8986" stroke-width="2"/></svg></label>
            <span>100%</span>
          </footer>
        </div>
      </section></main>
      <footer class="bottom">
        <button class="desk" aria-label="Mostrar área de trabalho"><svg width="18" height="18" viewBox="3 3 25 25">${folder}<rect x="12" y="13" width="7" height="7" fill="none" stroke="#444" stroke-width="1.500"/></svg></button>
        <span class="grip"></span>
        <button class="task">${this.icon("calc", 18)}<span>Sem título 1 - LibreO...</span></button>
        ${this.pager()}
      </footer>`;
  }
}
